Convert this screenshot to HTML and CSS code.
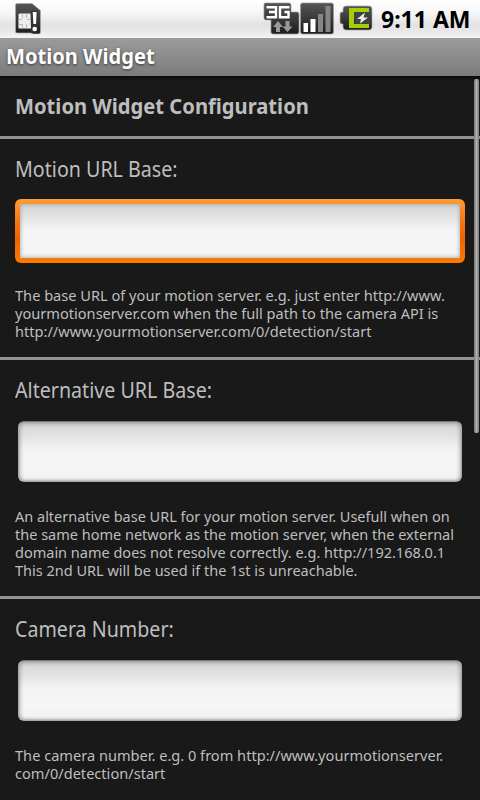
FILE: index.html
```html
<!DOCTYPE html>
<html lang="en">
<head>
<meta charset="utf-8">
<title>Motion Widget</title>
<link rel="stylesheet" href="styles.css">
</head>
<body>
<header class="status">
  <svg class="sim" width="28" height="34" viewBox="0 0 28 34">
    <defs><linearGradient id="dark" x1="0" y1="0" x2="0" y2="1"><stop offset="0" stop-color="#555"/><stop offset=".5" stop-color="#3a3a3a"/><stop offset="1" stop-color="#1c1c1c"/></linearGradient></defs>
    <path d="M2 3.500h15l8.500 7V32q0 2-2 2H18l-2-1H2q-1.500 0-1.500-1.500V5Q.5 3.500 2 3.500z" fill="url(#dark)" stroke="#aaa" stroke-width=".7"/>
    <path d="M4.500 13.500h11l.5 15H3.500v-14z" fill="#eee"/>
    <path d="M7.500 13v5M11.500 13v5M3 19.500h4M12 19.500h4M7.500 24v5M11.500 24v5M3 24.500h4" stroke="#aaa" stroke-width=".8"/>
    <path d="M16 11h7l-1 14h-5zM16 26.500h6v6h-6z" fill="#333"/>
    <path d="M17.700 12h4l-.7 12h-2.600z" fill="#fff"/><circle cx="19.700" cy="29" r="2.300" fill="#fff"/>
  </svg>
  <svg class="tray" width="110" height="38" viewBox="0 0 110 38">
    <path d="M2 3h24q2 0 2 2v7h6q2 0 2 2v18q0 2-2 2H10q-2 0-2-2V20H3q-2 0-2-2V5q0-2 1-2z" fill="url(#dark)" stroke="#999" stroke-width=".7"/>
    <path d="M3.500 7.200H13v10H3.500M6 12h6M26.500 7.200H17v10h8.500V12h-4" fill="none" stroke="#fff" stroke-width="2.400"/>
    <path d="M15 21l5 6h-3v5h-4v-5h-3zM24.500 32l5-5.500h-3V21h-4v5.500h-3z" fill="#999"/>
    <rect x="37.500" y="3" width="33" height="31" rx="2" fill="url(#dark)" stroke="#999" stroke-width=".7"/>
    <path d="M40.500 23h4.500v9h-4.500zM47.500 19h5v13h-5z" fill="#fff"/>
    <path d="M55 14h5v18h-5zM62.500 6h5v26h-5z" fill="#858585"/>
    <path d="M83 6h23q3 0 3 3v18q0 3-3 3H83q-3 0-3-3v-3h-1q-2 0-2-2v-8q0-2 2-2h1V9q0-3 3-3z" fill="url(#dark)" stroke="#aaa" stroke-width=".7"/>
    <path d="M86 8h20v4H91v12h15v4H86z" fill="#a3d000"/>
    <path d="M92 12h15v12H92z" fill="#414141"/>
    <path d="M102 12.500l-8 6.500h4l-1 4.500 8-6h-4.500z" fill="#eee"/>
  </svg>
  <span class="clock">9:11 AM</span>
</header>
<div class="titlebar"><span class="title">Motion Widget</span></div>
<main class="content">
  <h1 class="heading"><span>Motion Widget Configuration</span></h1>
  <section class="setting">
    <label class="label" for="url">Motion URL Base:</label>
    <input class="field focused" id="url" type="text">
    <p class="help wide"><span>The base URL of your motion server. e.g. just enter http://www.</span><span>yourmotionserver.com when the full path to the camera API is</span><span>http://www.yourmotionserver.com/0/detection/start</span></p>
  </section>
  <section class="setting">
    <label class="label" for="alt">Alternative URL Base:</label>
    <input class="field" id="alt" type="text">
    <p class="help"><span>An alternative base URL for your motion server. Usefull when on</span><span>the same home network as the motion server, when the external</span><span>domain name does not resolve correctly. e.g. http://192.168.0.1</span><span>This 2nd URL will be used if the 1st is unreachable.</span></p>
  </section>
  <section class="setting">
    <label class="label" for="cam">Camera Number:</label>
    <input class="field" id="cam" type="text">
    <p class="help wide"><span>The camera number. e.g. 0 from http://www.yourmotionserver.</span><span>com/0/detection/start</span></p>
  </section>
  <div class="scrollbar"></div>
</main>
</body>
</html>
```
FILE: styles.css
```css
* { box-sizing: border-box; }
body {
  margin: 0;
  width: 480px;
  height: 800px;
  overflow: hidden;
  background: #191919;
  color: #bebebe;
  font-family: "Noto Sans", "Open Sans", sans-serif;
}
.status {
  height: 38px;
  display: flex;
  align-items: flex-start;
  background: linear-gradient(#fff 0, #f7f6f7 35%, #e4e2e4 65%, #e8e6e8 80%, #f4f4f4 100%);
}
.sim { margin-left: 15px; }
.tray { margin-left: 220px; }
.clock {
  margin-left: 8px;
  color: #000;
  font-size: 23px;
  font-weight: 700;
  line-height: 38px;
  white-space: nowrap;
}
.titlebar {
  height: 38px;
  padding-left: 6px;
  background: linear-gradient(#9b9b9b, #858585 70%, #797b78);
}
.title {
  display: inline-block;
  color: #fff;
  font-size: 21px;
  font-weight: 700;
  line-height: 36px;
  text-shadow: 0 1px 3px #333;
  transform: scaleX(.957);
  transform-origin: 0 0;
}
.content {
  position: relative;
  height: 724px;
  padding-top: 16px;
  overflow: hidden;
  background: linear-gradient(#080a09 0, #111412 3px, #191919 6px);
}
.heading {
  margin: 0;
  height: 44px;
  padding-left: 15px;
  font-size: 21px;
  line-height: 28px;
}
.heading span {
  display: inline-block;
  transform: scaleX(.96);
  transform-origin: 0 0;
}
.setting {
  display: flex;
  flex-direction: column;
  align-items: flex-start;
  border-top: 3px solid #929292;
  padding: 16px 15px;
}
.label {
  font-size: 21.5px;
  line-height: 28px;
  white-space: nowrap;
  transform: scaleX(.914);
  transform-origin: 0 0;
}
.field {
  width: 444px;
  height: 61px;
  margin: 17px 3px 26px;
  border: 1px solid #aaa;
  border-top-color: #777;
  border-radius: 6px;
  outline: 0;
  background: linear-gradient(#d6d6d6, #e1e0e1 20%, #eceaec 35%, #f5f3f5 48%, #f6f6f6 75%, #f2f0f3);
  box-shadow: inset 0 1px 5px #8a8a8a, inset 0 -1px 2px #ccc;
}
.focused {
  width: 450px;
  height: 64px;
  margin: 16px 0 24px;
  border: 5px solid transparent;
  background:
    linear-gradient(#d6d6d6, #e1e0e1 20%, #eceaec 35%, #f5f3f5 48%, #f6f6f6 75%, #f2f0f3) padding-box,
    linear-gradient(#ff9c38, #f98020 25%, #f26200 60%, #fa7c00) border-box;
  box-shadow: inset 0 0 4px #999;
}
.help {
  margin: -1px 0 1px;
  font-size: 14.5px;
  line-height: 18px;
  white-space: nowrap;
}
.help span {
  display: block;
  width: max-content;
  transform-origin: 0 0;
}
.wide span { transform: scaleX(1.006); }
.scrollbar {
  position: absolute;
  top: 3px;
  right: 1px;
  width: 5px;
  height: 354px;
  border-radius: 2px;
  background: linear-gradient(90deg, #777, #b0b0b0 50%, #777);
}
```
